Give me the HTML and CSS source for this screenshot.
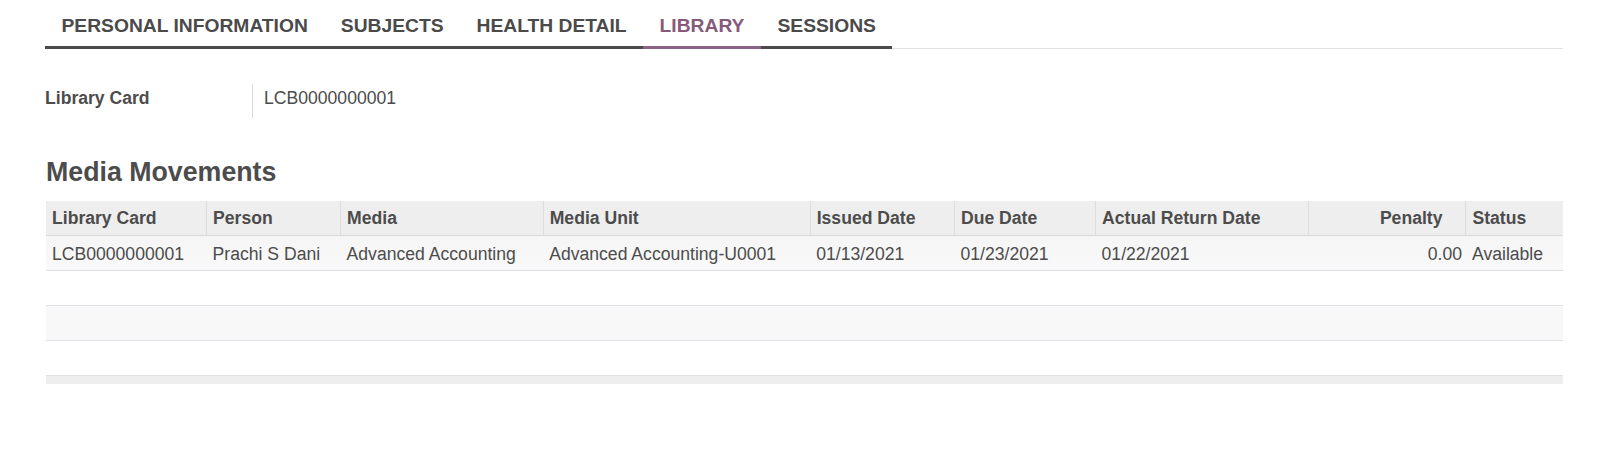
FILE: index.html
```html
<!DOCTYPE html>
<html lang="en">
<head>
<meta charset="utf-8">
<title>Library</title>
<link rel="stylesheet" href="styles.css">
</head>
<body>
<div class="page">
  <ul class="tabs">
    <li class="tab">PERSONAL INFORMATION</li>
    <li class="tab">SUBJECTS</li>
    <li class="tab">HEALTH DETAIL</li>
    <li class="tab active">LIBRARY</li>
    <li class="tab">SESSIONS</li>
  </ul>

  <div class="field-row">
    <div class="field-label">Library Card</div>
    <div class="field-value">LCB0000000001</div>
  </div>

  <h2 class="section-title">Media Movements</h2>

  <table class="list">
    <colgroup>
      <col class="c-card"><col class="c-person"><col class="c-media"><col class="c-unit">
      <col class="c-issued"><col class="c-due"><col class="c-return"><col class="c-penalty"><col class="c-status">
    </colgroup>
    <thead>
      <tr>
        <th>Library Card</th>
        <th>Person</th>
        <th>Media</th>
        <th>Media Unit</th>
        <th>Issued Date</th>
        <th>Due Date</th>
        <th>Actual Return Date</th>
        <th class="num head-num">Penalty</th>
        <th>Status</th>
      </tr>
    </thead>
    <tbody>
      <tr class="data-row">
        <td>LCB0000000001</td>
        <td>Prachi S Dani</td>
        <td>Advanced Accounting</td>
        <td>Advanced Accounting-U0001</td>
        <td>01/13/2021</td>
        <td>01/23/2021</td>
        <td>01/22/2021</td>
        <td class="num">0.00</td>
        <td>Available</td>
      </tr>
      <tr class="empty-row"><td colspan="9"></td></tr>
      <tr class="empty-row striped"><td colspan="9"></td></tr>
      <tr class="empty-row"><td colspan="9"></td></tr>
    </tbody>
    <tfoot>
      <tr class="foot-row"><td colspan="9"></td></tr>
    </tfoot>
  </table>
</div>
</body>
</html>
```

FILE: styles.css
```css
* { box-sizing: border-box; }

html, body {
  margin: 0;
  padding: 0;
  background: #ffffff;
}

body {
  font-family: "Liberation Sans", Arial, sans-serif;
  font-size: 17.6px;
  color: #4c4c4c;
}

.page {
  width: 1563px;
  padding-left: 45px;
}

/* Tabs */
.tabs {
  list-style: none;
  margin: 0;
  padding: 0;
  display: flex;
  border-bottom: 1px solid #dee2e6;
  height: 49px;
}

.tab {
  padding: 15px 16.5px 0;
  height: 49px;
  font-size: 19.25px;
  line-height: 22px;
  font-weight: bold;
  color: #4a4a4a;
  border-bottom: 3px solid #4a4a4a;
  margin-bottom: -1px;
}

.tab.active {
  color: #875a7b;
  border-bottom-color: #8b6384;
}

/* Field row */
.field-row {
  display: flex;
  margin-top: 35px;
  height: 34px;
}

.field-label {
  width: 207px;
  font-weight: bold;
  line-height: 26px;
  padding-top: 1px;
}

.field-value {
  border-left: 1px solid #d9d9d9;
  padding-left: 11px;
  line-height: 26px;
  padding-top: 1px;
}

/* Section title */
.section-title {
  margin: 38px 0 0 1px;
  font-size: 26.75px;
  line-height: 32px;
  font-weight: bold;
  color: #4c4c4c;
  height: 45px;
}

/* Table */
.list {
  margin-left: 1px;
  width: 1517px;
  border-collapse: collapse;
  table-layout: fixed;
}

.c-card { width: 160.6px; }
.c-person { width: 134px; }
.c-media { width: 202.6px; }
.c-unit { width: 267px; }
.c-issued { width: 144.3px; }
.c-due { width: 141.1px; }
.c-return { width: 212.8px; }
.c-penalty { width: 157.6px; }
.c-status { width: 97px; }

.list th {
  background: #eeeeee;
  text-align: left;
  font-weight: bold;
  padding: 7px 6px 6px;
  line-height: 20px;
  height: 34px;
  border-left: 1px solid #dedede;
  border-bottom: 1px solid #dadada;
  white-space: nowrap;
  overflow: hidden;
}

.list th:first-child { border-left: none; }

.list td {
  padding: 8px 6px 6px;
  line-height: 20px;
  white-space: nowrap;
  overflow: hidden;
}

.list .num { text-align: right; }
.list td.num { padding-right: 4px; }
.list th.head-num { padding-right: 23px; }

.data-row td {
  background: linear-gradient(#f5f5f5, #f9f9f9);
  height: 35px;
  border-bottom: 1px solid #dee2e6;
}

.empty-row td {
  height: 35px;
  border-bottom: 1px solid #dee2e6;
  padding: 0;
}

.empty-row.striped td {
  background: #f8f8f8;
}

.foot-row td {
  background: #eeeeee;
  height: 9px;
  padding: 0;
}
```
